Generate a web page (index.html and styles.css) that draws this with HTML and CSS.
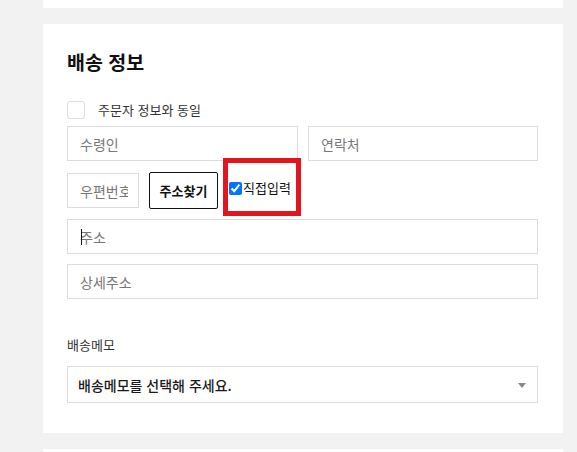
FILE: index.html
```html
<!DOCTYPE html>
<html lang="ko">
<head>
<meta charset="utf-8">
<link rel="stylesheet" href="styles.css">
</head>
<body>
<div class="card card-top"></div>
<section class="card card-main">
  <h2 class="title">배송 정보</h2>
  <label class="same-row">
    <span class="box"></span>
    <span class="same-text">주문자 정보와 동일</span>
  </label>
  <div class="row two">
    <input class="field" type="text" placeholder="수령인">
    <input class="field" type="text" placeholder="연락처">
  </div>
  <div class="row zip">
    <input class="field zip-field" type="text" placeholder="우편번호">
    <button class="find-btn" type="button">주소찾기</button>
    <label class="direct">
      <input class="direct-check" type="checkbox" checked>
      <span class="direct-text">직접입력</span>
      <span class="annot"></span>
    </label>
  </div>
  <div class="row caret-wrap">
    <input class="field" type="text" placeholder="주소">
    <span class="caret"></span>
  </div>
  <div class="row">
    <input class="field" type="text" placeholder="상세주소">
  </div>
  <div class="memo-label">배송메모</div>
  <div class="select">
    <span class="select-text">배송메모를 선택해 주세요.</span>
  </div>
</section>
<div class="card card-bottom"></div>
</body>
</html>
```
FILE: styles.css
```css
* { box-sizing: border-box; }
html, body { margin: 0; padding: 0; }
body {
  background: #f2f2f2;
  font-family: "Noto Sans CJK KR", "Noto Sans", sans-serif;
  color: #333;
  overflow: hidden;
  height: 452px;
}
.card {
  background: #fff;
  margin-left: 43px;
  width: 520px;
}
.card-top { height: 8px; }
.card-main {
  margin-top: 16px;
  padding: 26px 25px 30px 24px;
  display: flex;
  flex-direction: column;
}
.card-bottom { margin-top: 16px; height: 20px; }
.title {
  margin: 0;
  font-size: 19.5px;
  line-height: 24px;
  font-weight: 700;
  color: #111;
}
.same-row {
  margin-top: 27px;
  display: flex;
  align-items: center;
  height: 18px;
}
.box {
  width: 18px;
  height: 18px;
  border: 1px solid #dcdcdc;
  border-radius: 3px;
  background: #fff;
}
.same-text {
  margin-left: 13px;
  font-size: 13px;
  line-height: 18px;
  color: #333;
}
.row {
  display: flex;
  gap: 10px;
  margin-top: 10px;
}
.row.two { margin-top: 7px; }
.row.zip {
  margin-top: 11px;
  height: 37px;
  align-items: center;
}
.field {
  flex: 1;
  min-width: 0;
  height: 35px;
  border: 1px solid #dcdcdc;
  border-radius: 0;
  padding: 0 10px 0 12px;
  font-family: inherit;
  font-size: 14px;
  color: #333;
  background: #fff;
  outline: none;
}
.field::placeholder { color: #777; }
.row.two .field:first-child { flex: 0 0 231px; }
.zip-field { flex: 0 0 72px; }
.find-btn {
  width: 69px;
  height: 37px;
  border: 1px solid #111;
  border-radius: 2px;
  background: #fff;
  font-family: inherit;
  font-size: 13px;
  font-weight: 700;
  color: #111;
  padding: 0;
}
.direct {
  position: relative;
  align-self: stretch;
  display: flex;
  align-items: center;
  padding-bottom: 5px;
}
.direct-check {
  margin: 0 0 0 1px;
  width: 13px;
  height: 13px;
}
.direct-text {
  margin-left: 1px;
  font-size: 13px;
  line-height: 16px;
  color: #111;
}
.annot {
  position: absolute;
  left: -5px;
  top: -14px;
  width: 78px;
  height: 58px;
  border: 5px solid #e3161d;
  pointer-events: none;
}
.caret-wrap { position: relative; }
.caret {
  position: absolute;
  left: 14px;
  top: 10px;
  width: 1px;
  height: 16px;
  background: #111;
}
.memo-label {
  margin-top: 37px;
  font-size: 13px;
  line-height: 18px;
  color: #333;
}
.select {
  position: relative;
  margin-top: 12px;
  height: 37px;
  border: 1px solid #dcdcdc;
  display: flex;
  align-items: center;
  padding: 0 12px 0 10px;
}
.select-text {
  font-size: 14px;
  font-weight: 500;
  color: #1a1a1a;
}
.select::after {
  content: "";
  position: absolute;
  right: 11px;
  top: 16px;
  border-left: 4px solid transparent;
  border-right: 4px solid transparent;
  border-top: 5px solid #888;
}
```
